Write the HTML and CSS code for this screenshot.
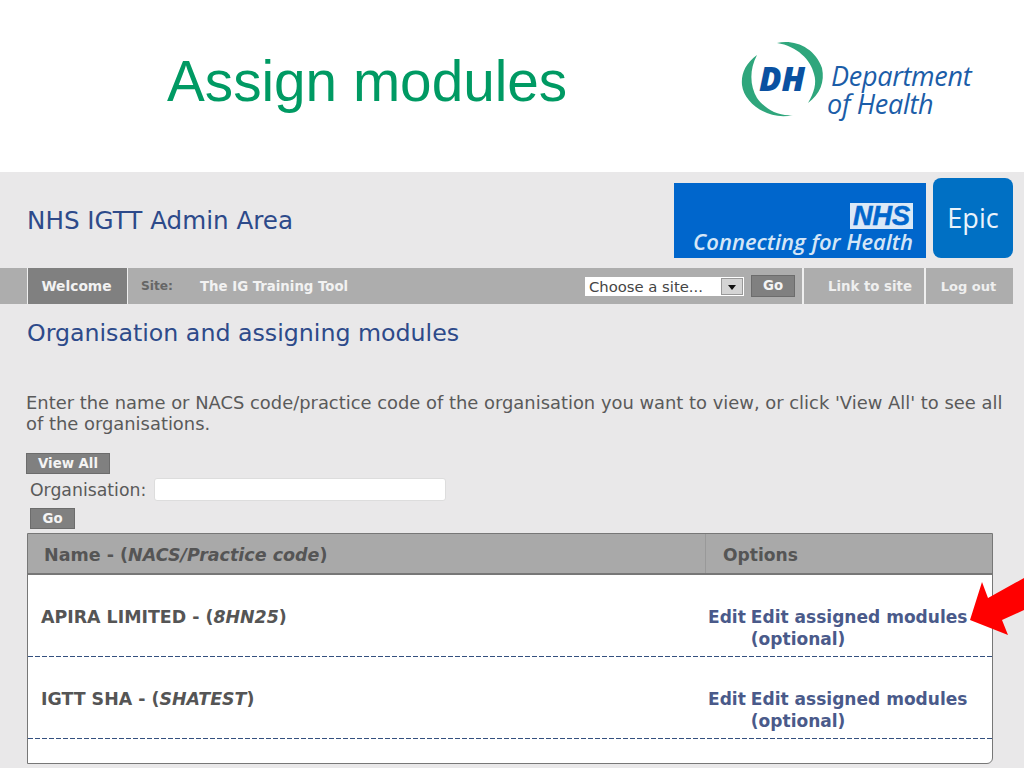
FILE: index.html
```html
<!DOCTYPE html>
<html lang="en">
<head>
<meta charset="utf-8">
<title>Assign modules</title>
<link rel="stylesheet" href="styles.css">
</head>
<body>
<div class="slide">
  <header class="slide-head">
    <h1 class="slide-title">Assign modules</h1>
    <div class="dh-logo">
      <svg class="dh-arcs" width="90" height="84" viewBox="0 0 90 84">
        <path d="M37 5 C55 1 75 10 82 30 C85 44 80 56 68 65 C74 55 77 45 74 36 C71 22 57 8 37 5 Z" fill="#2fa67c"/>
        <path d="M17 17 C5 26 1 36 2 47 C4 66 30 83 53 77 C38 79 24 70 17 60 C10 48 9 32 17 17 Z" fill="#2fa67c"/>
      </svg>
      <span class="dh-mark">DH</span>
      <div class="dh-names">
        <span class="dh-name">Department</span>
        <span class="dh-name dh-name-second">of Health</span>
      </div>
    </div>
  </header>
  <main class="panel">
    <div class="top-row">
      <div class="area-title">NHS IGTT Admin Area</div>
      <div class="cfh">
        <div class="nhs-mark">NHS</div>
        <div class="cfh-text">Connecting for Health</div>
      </div>
      <div class="epic">Epic</div>
    </div>
    <nav class="nav">
      <span class="nav-welcome">Welcome</span>
      <span class="nav-label">Site:</span>
      <span class="nav-site">The IG Training Tool</span>
      <span class="site-select"><span class="site-select-text">Choose a site...</span><span class="site-select-btn"></span></span>
      <span class="btn nav-go">Go</span>
      <span class="nav-link nav-link-site">Link to site</span>
      <span class="nav-link nav-link-out">Log out</span>
    </nav>
    <h2 class="page-title">Organisation and assigning modules</h2>
    <p class="intro">Enter the name or NACS code/practice code of the organisation you want to view, or click 'View All' to see all of the organisations.</p>
    <span class="btn view-all">View All</span>
    <div class="org-row"><label class="org-label">Organisation:</label><span class="org-input"></span></div>
    <span class="btn org-go">Go</span>
    <div class="results">
      <div class="results-head">
        <div class="col-name">Name - (<i>NACS/Practice code</i>)</div>
        <div class="col-options">Options</div>
      </div>
      <div class="row">
        <div class="row-name">APIRA LIMITED - (<i>8HN25</i>)</div>
        <div class="row-options"><span class="edit">Edit</span><span class="assigned">Edit assigned modules (optional)</span></div>
      </div>
      <div class="row">
        <div class="row-name">IGTT SHA - (<i>SHATEST</i>)</div>
        <div class="row-options"><span class="edit">Edit</span><span class="assigned">Edit assigned modules (optional)</span></div>
      </div>
    </div>
  </main>
  <svg class="arrow" width="56" height="60" viewBox="968 578 56 60"><polygon points="970,620 982,582 988,598 1024,578 1024,610 1002,620 1008,635" fill="#ff0000"/></svg>
</div>
</body>
</html>
```
FILE: styles.css
```css
* { box-sizing: border-box; }
html, body { margin: 0; padding: 0; background: #fff; }
.slide { position: relative; width: 1024px; height: 768px; overflow: hidden; font-family: "DejaVu Sans", Verdana, sans-serif; }
.slide-head { height: 172px; position: relative; padding: 47px 0 0 167px; }
.slide-title { margin: 0; font: 400 56.7px/70px "Liberation Sans", Arial, sans-serif; color: #009a63; }
.dh-logo { position: absolute; left: 740px; top: 38px; width: 240px; height: 84px; }
.dh-arcs { position: absolute; left: 0; top: 0; }
.dh-mark { position: absolute; left: 19px; top: 24px; font: italic 800 33px/33px "Open Sans", sans-serif; color: #0a51a1; }
.dh-names { padding: 24px 0 0 91px; }
.dh-name { display: block; font: italic 400 27px/28px "Open Sans", sans-serif; color: #1b5da8; letter-spacing: -.3px; white-space: nowrap; }
.dh-name-second { margin-left: -4px; }

.panel { height: 596px; background: #e9e8e9; padding-top: 6px; }
.top-row { display: flex; height: 90px; padding-right: 11px; align-items: flex-end; }
.area-title { flex: 1; align-self: center; padding: 0 0 6px 27px; font-size: 24.6px; color: #2d4a8a; }
.cfh { width: 252px; height: 75px; margin-right: 7px; margin-bottom: 10px; background: #0066cc; display: flex; flex-direction: column; align-items: flex-end; padding: 20px 13px 0 0; color: #d5e6f7; }
.cfh-text { font: italic 600 22px/22px "Open Sans", sans-serif; margin-top: 1px; white-space: nowrap; }
.nhs-mark { width: 63px; height: 26px; background: #dbe9f7; color: #0066cc; font: italic 700 27px/26px "Liberation Sans", sans-serif; -webkit-text-stroke: .6px #0066cc; text-align: center; }
.epic { width: 80px; height: 80px; margin-bottom: 10px; background: #0070c4; border-radius: 8px; color: #eaf3fb; font: 400 27px/80px "Open Sans", sans-serif; text-align: center; }

.nav { display: flex; align-items: center; height: 36px; margin-right: 11px; background: #adadad; font-size: 13.8px; font-weight: 700; color: #f2f2f2; }
.nav-welcome { margin-left: 27px; width: 101px; height: 36px; padding-right: 2px; background: #808080; border: solid #efefef; border-width: 0 1px; line-height: 36px; text-align: center; }
.nav-label { margin-left: 13px; width: 59px; color: #666; font-size: 12.2px; }
.nav-site { width: 385px; font-size: 13.3px; white-space: nowrap; }
.site-select { display: flex; align-items: center; justify-content: space-between; width: 159px; height: 19px; background: #fff; font-weight: 400; font-size: 14.8px; line-height: 17px; color: #444; padding: 0 1px 0 4px; }
.site-select-text { white-space: nowrap; }
.site-select-btn { position: relative; flex: none; width: 22px; height: 17px; background: #d4d4d4; border: 1px solid #999; }
.site-select-btn::after { content: ""; position: absolute; left: 6px; top: 6px; border: 4px solid transparent; border-top: 5px solid #111; border-bottom: 0; }
.btn { display: inline-block; background: #808080; border: 1px solid #6c6c6c; color: #f4f4f4; font-weight: 700; font-size: 13.3px; text-align: center; }
.nav-go { width: 44px; height: 22px; margin-left: 7px; line-height: 20px; }
.nav-link { height: 36px; line-height: 37px; border-left: 2px solid #efefef; text-align: center; font-size: 13.3px; color: #efefef; white-space: nowrap; }
.nav-link-site { margin-left: 7px; width: 122px; padding-left: 12px; }
.nav-link-out { width: 87px; font-size: 13px; }

.page-title { margin: 15px 0 0 27px; font: 400 23.7px/28px "DejaVu Sans", sans-serif; color: #2d4a8a; }
.intro { margin: 45px 12px 0 26px; font-size: 17.9px; line-height: 21px; color: #5a5a5a; }
.view-all { display: block; width: 84px; height: 21px; margin: 19px 0 0 26px; line-height: 19px; }
.org-row { display: flex; align-items: center; height: 23px; margin: 4px 0 0 30px; font-size: 17.3px; color: #5a5a5a; }
.org-label { width: 124px; }
.org-input { width: 292px; height: 23px; background: #fff; border: 1px solid #ddd; border-radius: 3px; }
.org-go { display: block; width: 45px; height: 21px; margin: 7px 0 0 30px; line-height: 19px; }

.results { margin: 4px 31px 0 27px; height: 231px; background: #fff; border: 1px solid #777; border-radius: 0 0 6px 0; }
.results-head { display: flex; height: 41px; background: #a9a9a9; border-bottom: 2px solid #777; font-size: 17.5px; font-weight: 700; color: #555; line-height: 42px; }
.col-name { width: 678px; padding-left: 16px; border-right: 1px solid #999; }
.col-options { padding-left: 17px; font-size: 17.1px; }
.row { display: flex; height: 82px; background: linear-gradient(to right, #34507f 5px, transparent 5px) left bottom / 7px 1px repeat-x; }
.row-name { width: 680px; padding: 32px 0 0 13px; font-size: 17.4px; font-weight: 700; color: #555; line-height: 20px; }
.row-options { display: flex; padding-top: 32px; font-size: 17.05px; font-weight: 700; color: #4a5a8a; line-height: 21.5px; }
.edit { margin-right: 5px; }
.assigned { width: 226px; text-align: left; }
.arrow { position: absolute; left: 968px; top: 578px; }
```
